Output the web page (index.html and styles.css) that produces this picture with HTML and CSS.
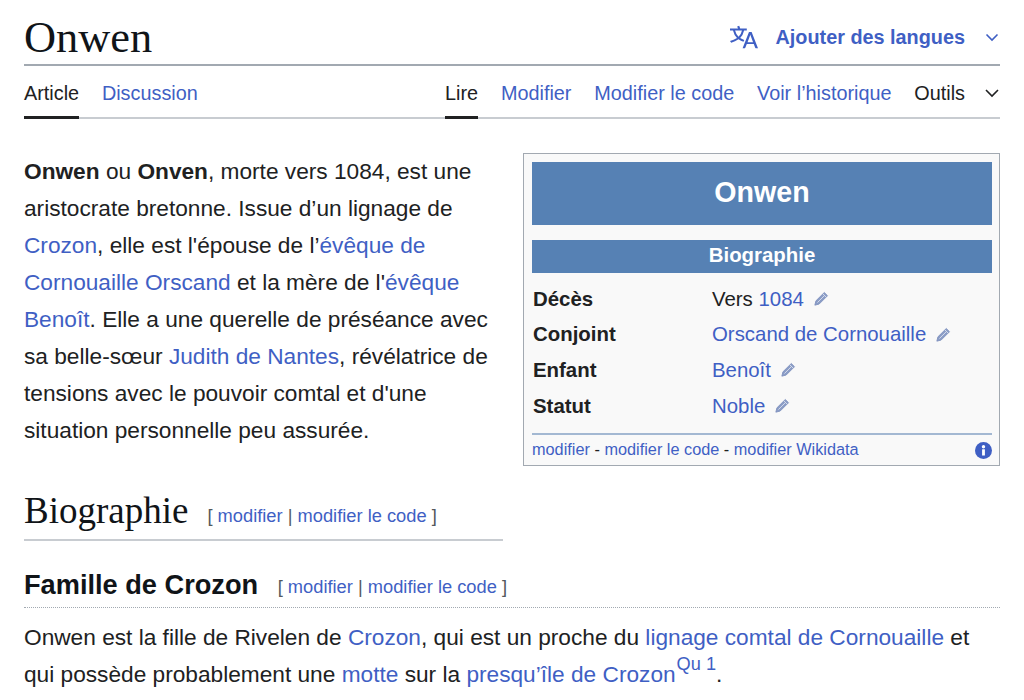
FILE: index.html
```html
<!DOCTYPE html>
<html lang="fr">
<head>
<meta charset="utf-8">
<title>Onwen</title>
<link rel="stylesheet" href="styles.css">
</head>
<body>
<main class="page">
<header class="title-row">
  <h1 class="title">Onwen</h1>
  <a class="lang-btn" href="#">
    <svg class="lang-icon" viewBox="0 0 20 20" aria-hidden="true"><path d="M20 18h-1.44a.6.6 0 0 1-.4-.12.8.8 0 0 1-.23-.31L17 15h-5l-1 2.54a.8.8 0 0 1-.22.3.6.6 0 0 1-.4.14H9l4.55-11.47h1.89zm-3.53-4.31L14.89 9.5a12 12 0 0 1-.39-1.24q-.09.37-.19.69l-.19.56-1.58 4.19zm-6.3-1.58a13.4 13.4 0 0 1-2.91-1.41 11.46 11.46 0 0 0 2.81-5.37H12V4H7.31a4 4 0 0 0-.2-.56C6.87 2.79 6.6 2 6.6 2l-1.47.5s.4.89.6 1.5H0v1.33h2.15A11.23 11.23 0 0 0 5 10.7a17.2 17.2 0 0 1-5 2.1q.56.82.87 1.38a23.3 23.3 0 0 0 5.22-2.51 15.6 15.6 0 0 0 3.56 1.77zM3.63 5.33h4.91a8.1 8.1 0 0 1-2.45 4.45 9.1 9.1 0 0 1-2.46-4.45"/></svg>
    <span>Ajouter des langues</span>
    <svg class="chev chev-blue" viewBox="0 0 16 16" aria-hidden="true"><path d="M2.5 5.5 8 11 13.5 5.5"/></svg>
  </a>
</header>
<nav class="tabs">
  <div class="tab-group">
    <a class="tab tab-active" href="#">Article</a>
    <a class="tab" href="#">Discussion</a>
  </div>
  <div class="tab-group">
    <a class="tab tab-active" href="#">Lire</a>
    <a class="tab" href="#">Modifier</a>
    <a class="tab" href="#">Modifier le code</a>
    <a class="tab" href="#">Voir l’historique</a>
    <a class="tab tab-tools" href="#">Outils
      <svg class="chev chev-dark" viewBox="0 0 16 16" aria-hidden="true"><path d="M2 5 8 11 14 5"/></svg>
    </a>
  </div>
</nav>
<article class="content">
  <aside class="infobox">
    <div class="ib-title">Onwen</div>
    <div class="ib-section">Biographie</div>
    <dl class="ib-rows">
      <div class="ib-row"><dt>Décès</dt><dd>Vers <a href="#">1084</a><svg class="pen" viewBox="0 0 14 14" aria-hidden="true"><path class="pen-body" d="M.8 13.2l1-4L9.6 1.4l3 3-7.8 7.8z"/><path class="pen-line" d="M8.3 2.7l3 3M3.2 10.8l6.8-6.8"/></svg></dd></div>
      <div class="ib-row"><dt>Conjoint</dt><dd><a href="#">Orscand de Cornouaille</a><svg class="pen" viewBox="0 0 14 14" aria-hidden="true"><path class="pen-body" d="M.8 13.2l1-4L9.6 1.4l3 3-7.8 7.8z"/><path class="pen-line" d="M8.3 2.7l3 3M3.2 10.8l6.8-6.8"/></svg></dd></div>
      <div class="ib-row"><dt>Enfant</dt><dd><a href="#">Benoît</a><svg class="pen" viewBox="0 0 14 14" aria-hidden="true"><path class="pen-body" d="M.8 13.2l1-4L9.6 1.4l3 3-7.8 7.8z"/><path class="pen-line" d="M8.3 2.7l3 3M3.2 10.8l6.8-6.8"/></svg></dd></div>
      <div class="ib-row"><dt>Statut</dt><dd><a href="#">Noble</a><svg class="pen" viewBox="0 0 14 14" aria-hidden="true"><path class="pen-body" d="M.8 13.2l1-4L9.6 1.4l3 3-7.8 7.8z"/><path class="pen-line" d="M8.3 2.7l3 3M3.2 10.8l6.8-6.8"/></svg></dd></div>
    </dl>
    <div class="ib-foot">
      <span><a href="#">modifier</a> - <a href="#">modifier le code</a> - <a href="#">modifier Wikidata</a></span>
      <svg class="info" viewBox="0 0 18 18" aria-hidden="true"><circle class="info-disc" cx="9" cy="9" r="9"/><rect class="info-mark" x="7.5" y="7.6" width="3" height="6.8" rx=".3"/><circle class="info-mark" cx="9" cy="5" r="1.8"/></svg>
    </div>
  </aside>
  <p class="lead"><b>Onwen</b> ou <b>Onven</b>, morte vers 1084, est une aristocrate bretonne. Issue d’un lignage de <a href="#">Crozon</a>, elle est l'épouse de l’<a href="#">évêque de Cornouaille Orscand</a> et la mère de l'<a href="#">évêque Benoît</a>. Elle a une querelle de préséance avec sa belle-sœur <a href="#">Judith de Nantes</a>, révélatrice de tensions avec le pouvoir comtal et d'une situation personnelle peu assurée.</p>
  <h2 class="h2"><span class="h2-text">Biographie</span><span class="edit edit-h2">[ <a href="#">modifier</a> | <a href="#">modifier le code</a> ]</span></h2>
  <h3 class="h3"><span class="h3-text">Famille de Crozon</span><span class="edit edit-h3">[ <a href="#">modifier</a> | <a href="#">modifier le code</a> ]</span></h3>
  <p class="para">Onwen est la fille de Rivelen de <a href="#">Crozon</a>, qui est un proche du <a href="#">lignage comtal de Cornouaille</a> et qui possède probablement une <a href="#">motte</a> sur la <a href="#">presqu’île de Crozon</a><sup class="ref"><a href="#">Qu 1</a></sup>.</p>
</article>
</main>
</body>
</html>
```
FILE: styles.css
```css
* { box-sizing: border-box; }
html, body { margin: 0; padding: 0; background: #fff; overflow: hidden; height: 700px; }
body { font-family: "Liberation Sans", Arial, sans-serif; font-size: 22.68px; line-height: 36.96px; color: #202122; }
a { color: #3f5fc4; text-decoration: none; }
.page { padding: 0 24px; }

.title-row { display: flex; justify-content: space-between; align-items: flex-start; height: 66px; border-bottom: 2px solid #a2a9b1; }
.title { margin: 13px 0 0; font-family: "Liberation Serif", serif; font-weight: 400; font-size: 44.4px; line-height: 48px; color: #101418; }
.lang-btn { display: flex; align-items: center; margin-top: 22px; height: 30px; font-weight: 700; font-size: 19.84px; line-height: 30px; }
.lang-icon { width: 28px; height: 28px; margin-right: 17px; fill: #3f5fc4; }
.chev { fill: none; stroke-width: 1.6; }
.chev-blue { width: 16px; height: 16px; margin-left: 19px; stroke: #3f5fc4; }
.chev-dark { width: 16px; height: 16px; margin-left: 19px; stroke: #202122; }

.tabs { display: flex; justify-content: space-between; height: 53px; border-bottom: 2px solid #c8ccd1; }
.tab-group { display: flex; gap: 22.8px; }
.tab { display: flex; align-items: center; height: 53px; font-size: 19.84px; line-height: 30px; }
.tab-active { color: #202122; box-shadow: inset 0 -3px 0 #202122; }
.tab-tools { color: #202122; }

.content { padding-top: 34px; }
.infobox { float: right; width: 477px; height: 313px; margin-left: 20px; padding: 8px 7px 0 8px; border: 1px solid #a2a9b1; background: #f9f9f9; }
.ib-title { height: 63px; line-height: 60px; text-align: center; font-size: 28.6px; font-weight: 700; color: #fff; background: #5681b4; }
.ib-section { height: 33px; margin-top: 15px; line-height: 30px; text-align: center; font-size: 20.4px; font-weight: 700; color: #fff; background: #5681b4; }
.ib-rows { margin: 8px 0 0; }
.ib-row { display: flex; height: 35.6px; align-items: center; padding-left: 1px; font-size: 20.4px; line-height: 30px; }
.ib-row dt { width: 179px; font-weight: 700; }
.ib-row dd { margin: 0; display: flex; align-items: center; white-space: pre; }
.pen { width: 15px; height: 15px; margin-left: 10px; }
.pen-body { fill: #8b9dc6; stroke: #7d90bd; stroke-width: .8; stroke-linejoin: round; }
.pen-line { fill: none; stroke: #d5dcec; stroke-width: .9; }
.ib-foot { display: flex; justify-content: space-between; align-items: center; margin-top: 10px; border-top: 2px solid #a3b8d2; height: 30px; font-size: 16.3px; line-height: 28px; }
.info { width: 17px; height: 17px; margin-top: 3px; }
.info-disc { fill: #3f5fc4; }
.info-mark { fill: #fff; }

.lead { margin: 0; width: 470px; }
.h2 { width: 479px; height: 58px; margin: 34px 0 0; padding-top: 6px; border-bottom: 2px solid #c8ccd1; font-weight: 400; line-height: 44px; }
.h2-text { font-family: "Liberation Serif", serif; font-size: 37px; color: #101418; }
.edit { font-family: "Liberation Sans", Arial, sans-serif; font-size: 18.3px; font-weight: 400; color: #54595d; vertical-align: 1px; }
.edit-h2 { margin-left: 19px; }
.edit-h3 { margin-left: 19.5px; }
.h3 { height: 67px; margin: 0; padding-top: 25px; border-bottom: 1px dotted #a2a9b1; font-size: 27.2px; line-height: 38px; font-weight: 700; color: #101418; }
.para { margin: 11px 0 0; }
.ref { font-size: 18.2px; line-height: 0; vertical-align: 12px; margin-left: 1px; }
```
